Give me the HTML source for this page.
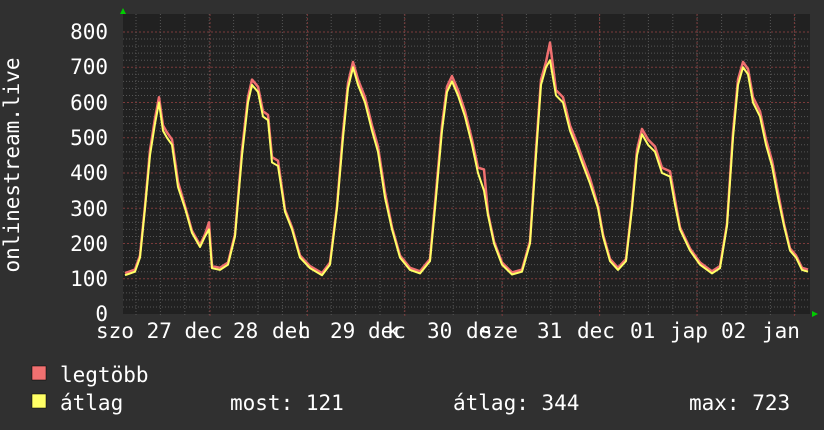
<!DOCTYPE html>
<html><head><meta charset="utf-8"><style>
html,body{margin:0;padding:0;background:#303030;}
svg{display:block}
text{font-family:"DejaVu Sans Mono","Liberation Mono",monospace;font-size:21px;fill:#fff}
</style></head><body>
<svg width="824" height="430" viewBox="0 0 824 430" xmlns="http://www.w3.org/2000/svg">
<rect width="824" height="430" fill="#303030"/>
<rect x="123" y="14" width="687" height="300" fill="#212121"/>
<g id="grid"></g>
<polygon points="120,14 126,14 123,8" fill="#00cc00"/>
<polygon points="812,311 812,317 818,314" fill="#00cc00"/>
<polyline id="red" fill="none" stroke="#f07070" stroke-width="2.5" stroke-linejoin="round"/>
<polyline id="yel" fill="none" stroke="#ffff66" stroke-width="2" stroke-linejoin="round"/>
<g text-anchor="end">
<text x="108" y="39">800</text><text x="108" y="74">700</text><text x="108" y="110">600</text>
<text x="108" y="145">500</text><text x="108" y="180">400</text>
<text x="108" y="216">300</text><text x="108" y="251">200</text>
<text x="108" y="286">100</text><text x="108" y="321">0</text>
</g>
<text transform="translate(19,165) rotate(-90)" text-anchor="middle">onlinestream.live</text>
<g>
<text x="96" y="338">szo 27 dec</text>
<text x="233" y="338">28</text><text x="272" y="338">dec</text><text x="298" y="338">h</text>
<text x="330" y="338">29</text><text x="368" y="338">dec</text><text x="387" y="338">k</text>
<text x="427" y="338">30</text><text x="466" y="338">de</text><text x="480" y="338">sze</text>
<text x="537" y="338">31</text><text x="577" y="338">dec</text>
<text x="630" y="338">01</text><text x="670" y="338">jap</text>
<text x="721" y="338">02</text><text x="762" y="338">jan</text>
</g>
<rect x="32" y="366" width="14" height="14" fill="#f07070" stroke="#000" stroke-width="0.5"/>
<rect x="32" y="394" width="14" height="14" fill="#ffff66" stroke="#000" stroke-width="0.5"/>
<text x="60" y="382">legtöbb</text>
<text x="60" y="410">átlag</text>
<text x="230" y="410">most: 121</text>
<text x="453" y="410">átlag: 344</text>
<text x="689" y="410">max: 723</text>
</svg>
<script>
var g=document.getElementById('grid'),s='';
function Y(v){return 314-v*0.3525;}
for(var v=20;v<=800;v+=20){var y=Y(v);var maj=v%100==0;
s+='<line x1="123" x2="810" y1="'+y+'" y2="'+y+'" stroke="'+(maj?'#7a3a3a':'#555')+'" stroke-dasharray="'+(maj?'2,2':'1,2')+'" stroke-width="1"/>';}
for(var x=136;x<810;x+=24.4){s+='<line x1="'+x+'" x2="'+x+'" y1="14" y2="317" stroke="#555" stroke-dasharray="1,2"/>';}
for(var x=210;x<810;x+=97.4){s+='<line x1="'+x+'" x2="'+x+'" y1="14" y2="317" stroke="#7a3a3a" stroke-dasharray="2,2"/>';}
g.innerHTML=s;
var d=[125,110,135,120,140,160,145,300,150,450,155,540,159,600,163,520,167,500,172,480,178,360,185,300,192,230,200,190,205,220,209,240,212,130,220,125,228,140,235,220,242,450,248,600,252,650,258,630,263,560,268,550,272,430,278,420,285,290,292,240,300,160,310,130,322,110,330,140,337,300,343,500,348,640,353,700,358,650,365,600,372,520,378,460,385,330,392,240,400,160,410,125,420,115,430,150,436,330,442,520,447,630,452,660,458,620,465,560,472,480,478,400,484,350,488,280,494,200,502,140,512,112,522,120,530,200,536,450,541,650,546,700,550,720,556,620,563,600,570,520,577,470,582,430,590,370,598,300,603,220,610,150,618,125,626,150,632,300,637,450,642,510,648,480,655,460,662,400,670,390,675,310,680,240,690,180,700,140,712,115,720,130,727,250,733,500,738,650,743,700,748,680,753,600,760,560,766,480,772,420,778,330,784,250,790,180,796,160,802,125,808,120];
var py='',pr='';
for(var i=0;i<d.length;i+=2){var x=d[i],v=d[i+1];py+=x+','+Y(v)+' ';var r=v+(v>300?15:6);if(x==548||x==550)r=v+50;if(x==484)r=v+60;if(x==209)r=v+20;pr+=x+','+Y(r)+' ';}
document.getElementById('yel').setAttribute('points',py);
document.getElementById('red').setAttribute('points',pr);
</script>
</body></html>
